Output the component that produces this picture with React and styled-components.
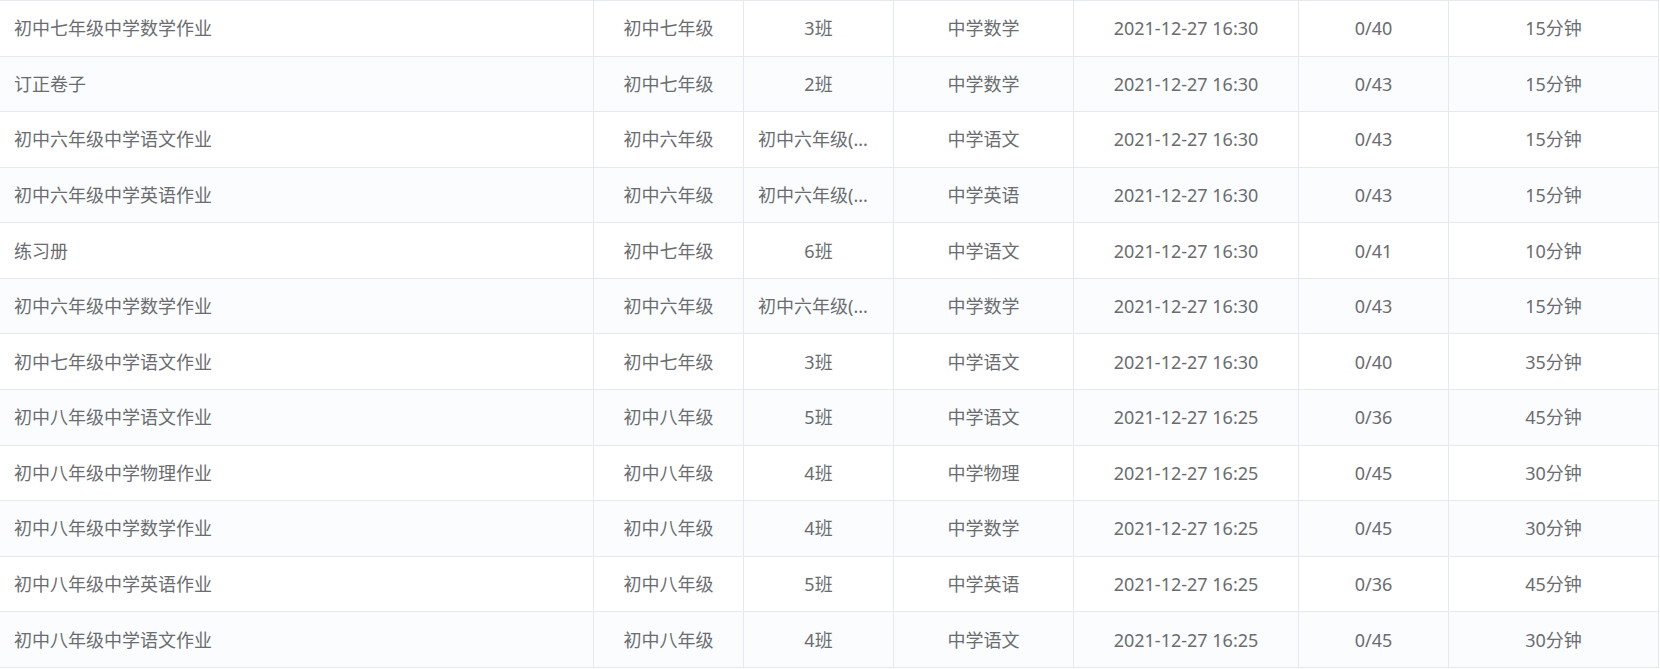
import React from "react";
import styled, { createGlobalStyle } from "styled-components";

const Global = createGlobalStyle`
  html, body { margin: 0; padding: 0; background: #ffffff; }
  body { font-family: "Noto Sans", "Noto Sans CJK SC", sans-serif; }
`;

const Table = styled.table`
  width: 1659px;
  table-layout: fixed;
  border-collapse: separate;
  border-spacing: 0;
  border-top: 1px solid #e4e9ef;
  font-family: "Noto Sans", "Noto Sans CJK SC", sans-serif;
  font-size: 18px;
  color: #6a6c70;
`;

const Row = styled.tr`
  height: 55.58px;
  background: ${(p) => (p.$striped ? "#fafcfd" : "#ffffff")};
`;

const Cell = styled.td`
  box-sizing: border-box;
  padding: 0 14px;
  border-bottom: 1px solid #e4e9ef;
  border-right: 1px solid #e4e9ef;
  text-align: ${(p) => (p.$left ? "left" : "center")};
  white-space: nowrap;
  overflow: hidden;
  text-overflow: ellipsis;
  vertical-align: middle;
  line-height: 24px;
`;

const widths = [594, 150, 150, 180, 225, 150, 210];

const SIX = "初中六年级(...";

const rows = [
  ["初中七年级中学数学作业", "初中七年级", "3班", "中学数学", "2021-12-27 16:30", "0/40", "15分钟"],
  ["订正卷子", "初中七年级", "2班", "中学数学", "2021-12-27 16:30", "0/43", "15分钟"],
  ["初中六年级中学语文作业", "初中六年级", SIX, "中学语文", "2021-12-27 16:30", "0/43", "15分钟"],
  ["初中六年级中学英语作业", "初中六年级", SIX, "中学英语", "2021-12-27 16:30", "0/43", "15分钟"],
  ["练习册", "初中七年级", "6班", "中学语文", "2021-12-27 16:30", "0/41", "10分钟"],
  ["初中六年级中学数学作业", "初中六年级", SIX, "中学数学", "2021-12-27 16:30", "0/43", "15分钟"],
  ["初中七年级中学语文作业", "初中七年级", "3班", "中学语文", "2021-12-27 16:30", "0/40", "35分钟"],
  ["初中八年级中学语文作业", "初中八年级", "5班", "中学语文", "2021-12-27 16:25", "0/36", "45分钟"],
  ["初中八年级中学物理作业", "初中八年级", "4班", "中学物理", "2021-12-27 16:25", "0/45", "30分钟"],
  ["初中八年级中学数学作业", "初中八年级", "4班", "中学数学", "2021-12-27 16:25", "0/45", "30分钟"],
  ["初中八年级中学英语作业", "初中八年级", "5班", "中学英语", "2021-12-27 16:25", "0/36", "45分钟"],
  ["初中八年级中学语文作业", "初中八年级", "4班", "中学语文", "2021-12-27 16:25", "0/45", "30分钟"],
];

export default function App() {
  return (
    <>
      <Global />
      <Table>
        <colgroup>
          {widths.map((w, i) => (
            <col key={i} style={{ width: w }} />
          ))}
        </colgroup>
        <tbody>
          {rows.map((r, i) => (
            <Row key={i} $striped={i % 2 === 1}>
              {r.map((c, j) => (
                <Cell key={j} $left={j === 0 || c.endsWith("...")}>
                  {c}
                </Cell>
              ))}
            </Row>
          ))}
        </tbody>
      </Table>
    </>
  );
}
